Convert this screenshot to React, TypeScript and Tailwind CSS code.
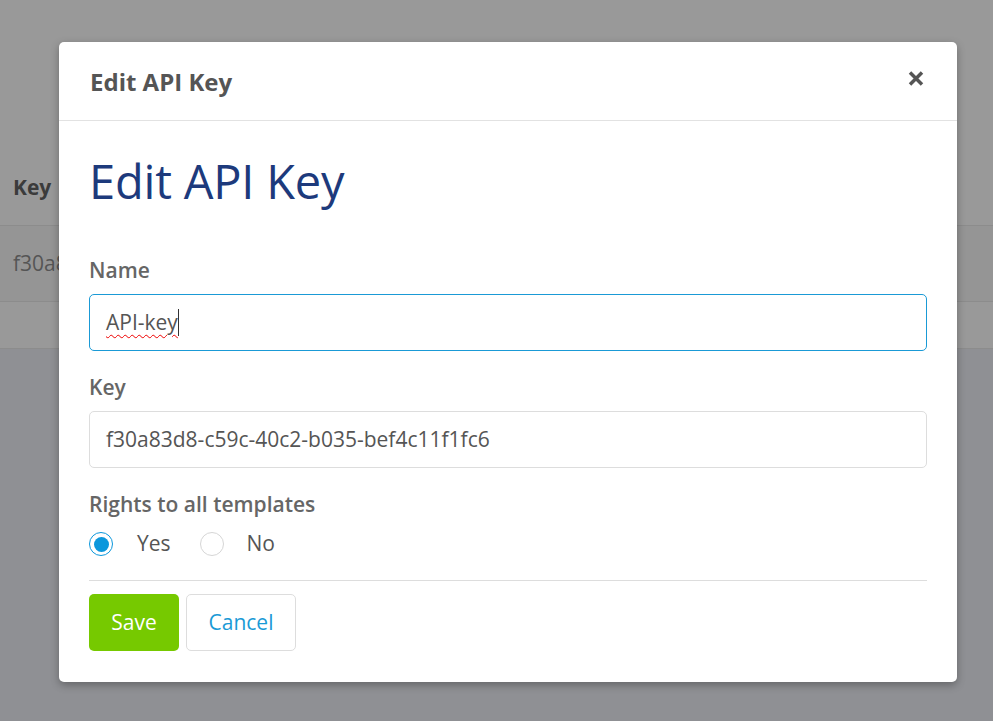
export default function App() {
  return (
    <div className="relative w-full h-[721px] overflow-hidden bg-[#999999] font-['Open_Sans',sans-serif]">
      {/* page behind the overlay */}
      <div className="pt-[150px]">
        <div className="h-[76px] border-b border-[#8c8c8c] flex items-center px-[13px]">
          <span className="text-[21px] font-bold text-[#3b3b3b]">Key</span>
        </div>
        <div className="h-[76px] border-b border-[#8c8c8c] bg-[#959595] flex items-center pl-[13px]">
          <span className="w-[46px] overflow-hidden whitespace-nowrap text-[21px] text-[#555555]">f30a83d8</span>
        </div>
        <div className="h-[47px] border-b border-[#8c8c8c]" />
      </div>
      <div className="bg-[#8f9094] h-full" />

      {/* modal */}
      <div className="absolute left-[59px] top-[42px] w-[898px] bg-white rounded-[5px] shadow-[0_3px_9px_rgba(0,0,0,0.3)]">
        <div className="h-[79px] border-b border-[#e2e2e2] flex items-center justify-between pl-[31px] pr-[33px]">
          <h4 className="text-[24px] font-bold text-[#555555] pt-[2px]">Edit API Key</h4>
          <svg width="16" height="15" viewBox="0 0 16 15" className="mb-[5px]">
            <path d="M2 1.5 L14 13.5 M14 1.5 L2 13.5" stroke="#555555" strokeWidth="3.5" />
          </svg>
        </div>
        <div className="px-[30px] pt-[35px] pb-[31px]">
          <h1 className="text-[47px] leading-[51px] tracking-[-0.2px] text-[#1d3a7c]">Edit API Key</h1>

          <label className="block mt-[48px] text-[21px] leading-[30px] font-semibold text-[#666666]">Name</label>
          <div className="mt-[9px] h-[57px] border border-[#1a9ad6] rounded-[5px] flex items-center px-[16px] text-[21px] text-[#555555]">
            <span className="underline decoration-wavy decoration-[#e00] decoration-1 underline-offset-4">API-key</span>
            <span className="w-px h-[27px] bg-[#333]" />
          </div>

          <label className="block mt-[21px] text-[21px] leading-[30px] font-semibold text-[#666666]">Key</label>
          <div className="mt-[9px] h-[57px] border border-[#dddddd] rounded-[5px] flex items-center px-[16px] text-[21px] text-[#555555]">
            f30a83d8-c59c-40c2-b035-bef4c11f1fc6
          </div>

          <label className="block mt-[21px] text-[21px] leading-[30px] font-semibold text-[#666666]">Rights to all templates</label>
          <div className="mt-[13px] flex items-center h-[24px] text-[21px] text-[#555555]">
            <span className="w-[24px] h-[24px] rounded-full border border-[#0b97dc] flex items-center justify-center">
              <span className="w-[15px] h-[15px] rounded-full bg-[#0b97dc]" />
            </span>
            <span className="ml-[24px]">Yes</span>
            <span className="ml-[29px] w-[24px] h-[24px] rounded-full border border-[#d6d6d6]" />
            <span className="ml-[23px]">No</span>
          </div>

          <div className="mt-[24px] border-t border-[#dddddd]" />

          <div className="mt-[13px] flex gap-[7px]">
            <button className="w-[90px] h-[57px] rounded-[5px] bg-[#76c900] text-white text-[21px]">Save</button>
            <button className="w-[110px] h-[57px] rounded-[5px] border border-[#dddddd] bg-white text-[#1a9ad6] text-[21px]">Cancel</button>
          </div>
        </div>
      </div>
    </div>
  );
}
